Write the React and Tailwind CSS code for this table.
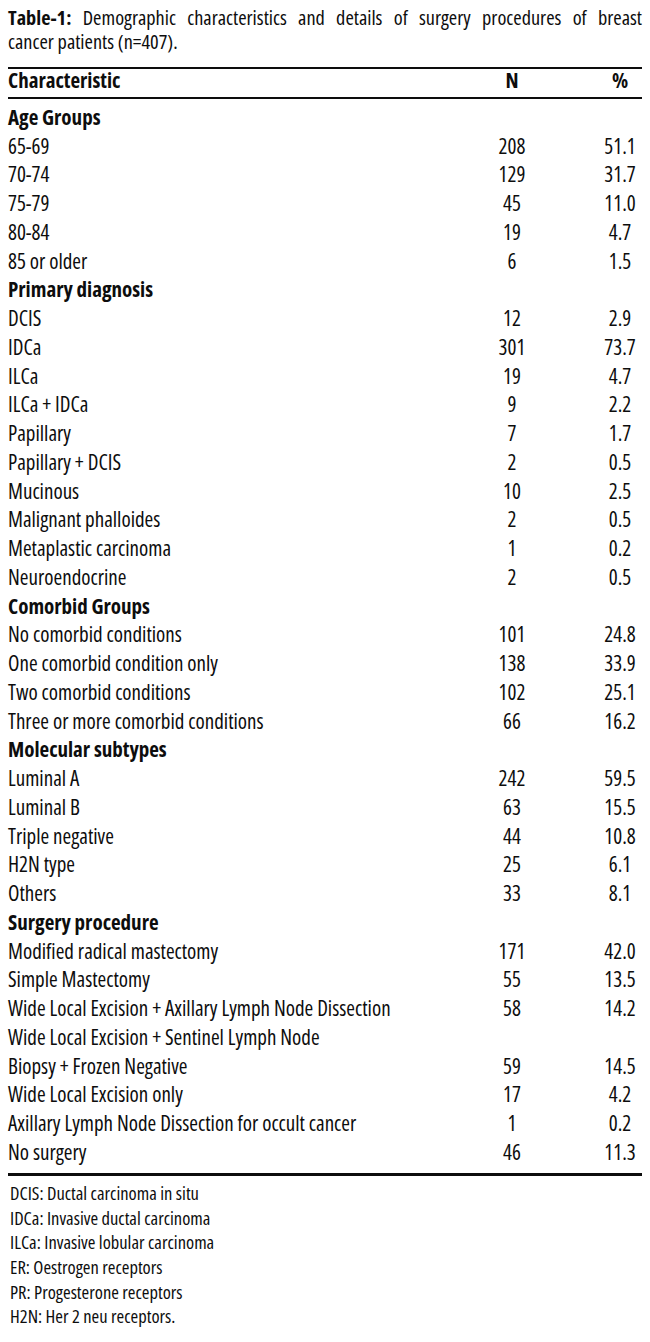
import React from "react";

const groups = [
  {
    title: "Age Groups",
    rows: [
      ["65-69", "208", "51.1"],
      ["70-74", "129", "31.7"],
      ["75-79", "45", "11.0"],
      ["80-84", "19", "4.7"],
      ["85 or older", "6", "1.5"],
    ],
  },
  {
    title: "Primary diagnosis",
    rows: [
      ["DCIS", "12", "2.9"],
      ["IDCa", "301", "73.7"],
      ["ILCa", "19", "4.7"],
      ["ILCa + IDCa", "9", "2.2"],
      ["Papillary", "7", "1.7"],
      ["Papillary + DCIS", "2", "0.5"],
      ["Mucinous", "10", "2.5"],
      ["Malignant phalloides", "2", "0.5"],
      ["Metaplastic carcinoma", "1", "0.2"],
      ["Neuroendocrine", "2", "0.5"],
    ],
  },
  {
    title: "Comorbid Groups",
    rows: [
      ["No comorbid conditions", "101", "24.8"],
      ["One comorbid condition only", "138", "33.9"],
      ["Two comorbid conditions", "102", "25.1"],
      ["Three or more comorbid conditions", "66", "16.2"],
    ],
  },
  {
    title: "Molecular subtypes",
    rows: [
      ["Luminal A", "242", "59.5"],
      ["Luminal B", "63", "15.5"],
      ["Triple negative", "44", "10.8"],
      ["H2N type", "25", "6.1"],
      ["Others", "33", "8.1"],
    ],
  },
  {
    title: "Surgery procedure",
    rows: [
      ["Modified radical mastectomy", "171", "42.0"],
      ["Simple Mastectomy", "55", "13.5"],
      ["Wide Local Excision + Axillary Lymph Node Dissection", "58", "14.2"],
      ["Wide Local Excision + Sentinel Lymph Node", "", ""],
      ["Biopsy + Frozen Negative", "59", "14.5"],
      ["Wide Local Excision only", "17", "4.2"],
      ["Axillary Lymph Node Dissection for occult cancer", "1", "0.2"],
      ["No surgery", "46", "11.3"],
    ],
  },
];

const notes = [
  "DCIS: Ductal carcinoma in situ",
  "IDCa: Invasive ductal carcinoma",
  "ILCa: Invasive lobular carcinoma",
  "ER: Oestrogen receptors",
  "PR: Progesterone receptors",
  "H2N: Her 2 neu receptors.",
];

function Row({ label, n, p }) {
  return (
    <div className="grid grid-cols-[1fr_172px_44px] h-[28.75px] leading-[28.75px] text-[21px]">
      <span className="whitespace-nowrap">{label}</span>
      <span className="text-center">{n}</span>
      <span className="text-center">{p}</span>
    </div>
  );
}

export default function App() {
  return (
    <div className="w-[650px] min-h-[1342px] bg-white text-[#0d0d0d] font-['Open_Sans',sans-serif] font-stretch-condensed px-[8px]">
      <div className="pt-[6.4px] text-[20.3px] leading-[23.5px]">
        <div className="text-justify [text-align-last:justify]">
          <span className="font-bold">Table-1:</span> Demographic characteristics and details of surgery procedures of breast
        </div>
        <div>cancer patients (n=407).</div>
      </div>
      <div className="mt-[14px] border-t-2 border-[#0d0d0d]" />
      <div className="grid grid-cols-[1fr_172px_44px] text-[21px] leading-[22px] font-bold pb-[6px]">
        <span>Characteristic</span>
        <span className="text-center">N</span>
        <span className="text-center">%</span>
      </div>
      <div className="border-t-2 border-[#0d0d0d]" />
      <div className="pt-[3.5px] pb-[6px]">
        {groups.map((g) => (
          <div key={g.title}>
            <div className="h-[28.75px] leading-[28.75px] text-[21px] font-bold">{g.title}</div>
            {g.rows.map((r) => (
              <Row key={r[0]} label={r[0]} n={r[1]} p={r[2]} />
            ))}
          </div>
        ))}
      </div>
      <div className="border-t-[3px] border-[#0d0d0d]" />
      <div className="pt-[5.5px] pl-[2px] text-[18.5px] leading-[24.6px]">
        {notes.map((t) => (
          <div key={t}>{t}</div>
        ))}
      </div>
    </div>
  );
}
